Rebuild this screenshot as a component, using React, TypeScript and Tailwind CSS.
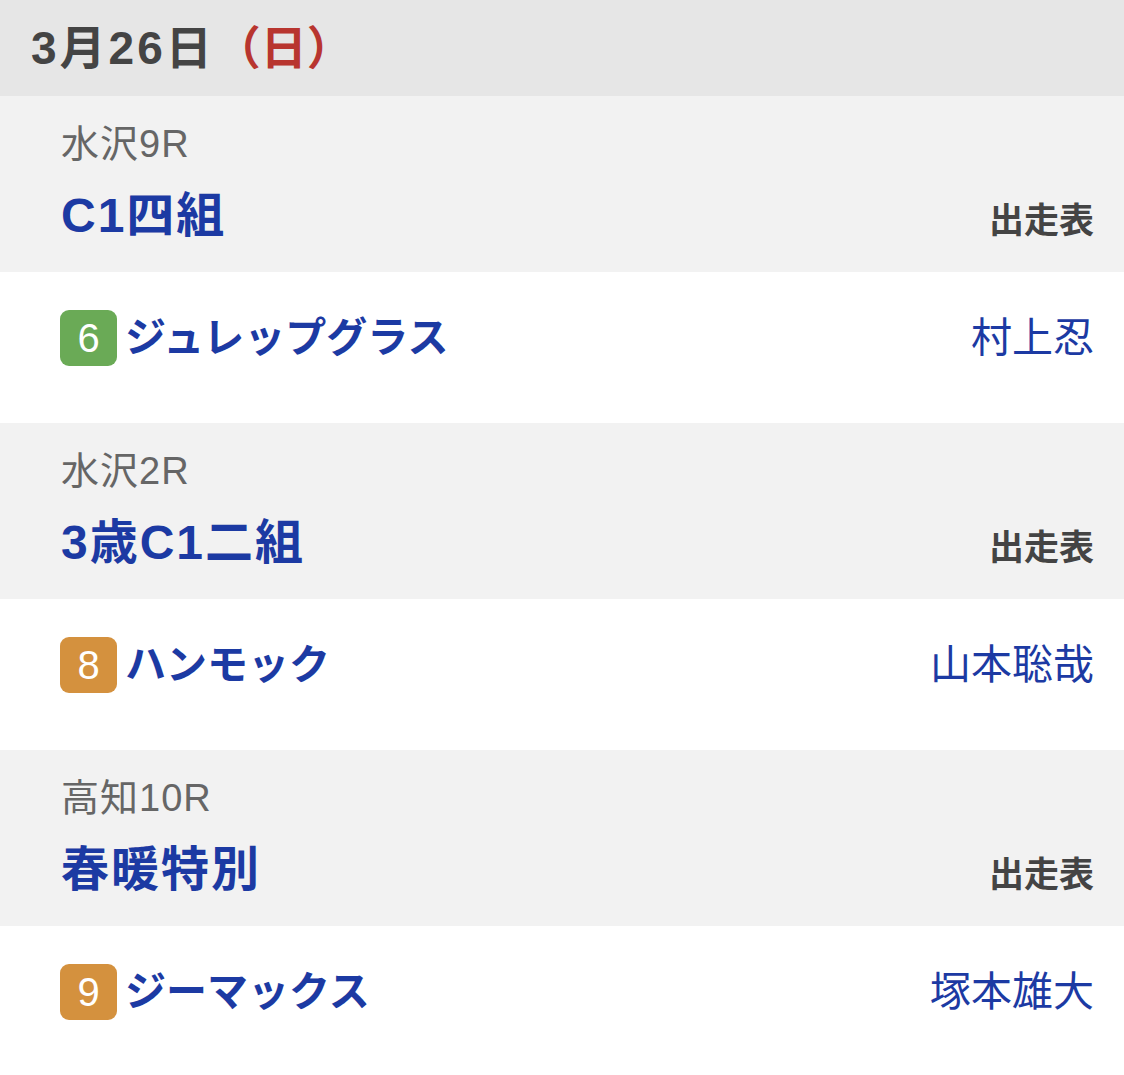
import React from "react";

const font = { fontFamily: '"Liberation Sans", "Noto Sans CJK JP", sans-serif' };

type Entry = {
  venue: string;
  race: string;
  num: string;
  badge: string;
  horse: string;
  jockey: string;
};

const entries: Entry[] = [
  { venue: "水沢9R", race: "C1四組", num: "6", badge: "bg-[#6aaa56]", horse: "ジュレップグラス", jockey: "村上忍" },
  { venue: "水沢2R", race: "3歳C1二組", num: "8", badge: "bg-[#d4913e]", horse: "ハンモック", jockey: "山本聡哉" },
  { venue: "高知10R", race: "春暖特別", num: "9", badge: "bg-[#d4913e]", horse: "ジーマックス", jockey: "塚本雄大" },
];

export default function App() {
  return (
    <div className="w-[1124px] h-[1075px] bg-white overflow-hidden" style={font}>
      <div className="h-[96px] bg-[#e6e6e6] flex items-center pl-[31px]">
        <span className="text-[46px] font-bold text-[#444444] leading-none tracking-[3px]">3月26日</span>
        <span className="text-[46px] font-bold text-[#b8352f] leading-none">（日）</span>
      </div>
      {entries.map((e) => (
        <div key={e.venue}>
          <div className="h-[176px] bg-[#f2f2f2] pl-[61px] pr-[30px] pt-[26px] flex flex-col">
            <div className="text-[38px] leading-[44px] text-[#666666] tracking-[1px]">{e.venue}</div>
            <div className="flex items-end justify-between mt-[22px]">
              <div className="text-[48px] font-bold leading-[56px] text-[#1c3aa3] tracking-[2px]">{e.race}</div>
              <div className="text-[35px] font-bold leading-[46px] text-[#444444]">出走表</div>
            </div>
          </div>
          <div className="h-[151px] bg-white pl-[60px] pr-[30px] pt-[38px] flex items-start justify-between">
            <div className="flex items-center">
              <div className={`${e.badge} w-[57px] h-[56px] rounded-[9px] flex items-center justify-center text-white text-[40px] leading-none`}>
                {e.num}
              </div>
              <div className="ml-[8px] text-[41px] font-bold text-[#1c3aa3] leading-none">{e.horse}</div>
            </div>
            <div className="text-[41px] text-[#1c3aa3] leading-[56px]">{e.jockey}</div>
          </div>
        </div>
      ))}
    </div>
  );
}
